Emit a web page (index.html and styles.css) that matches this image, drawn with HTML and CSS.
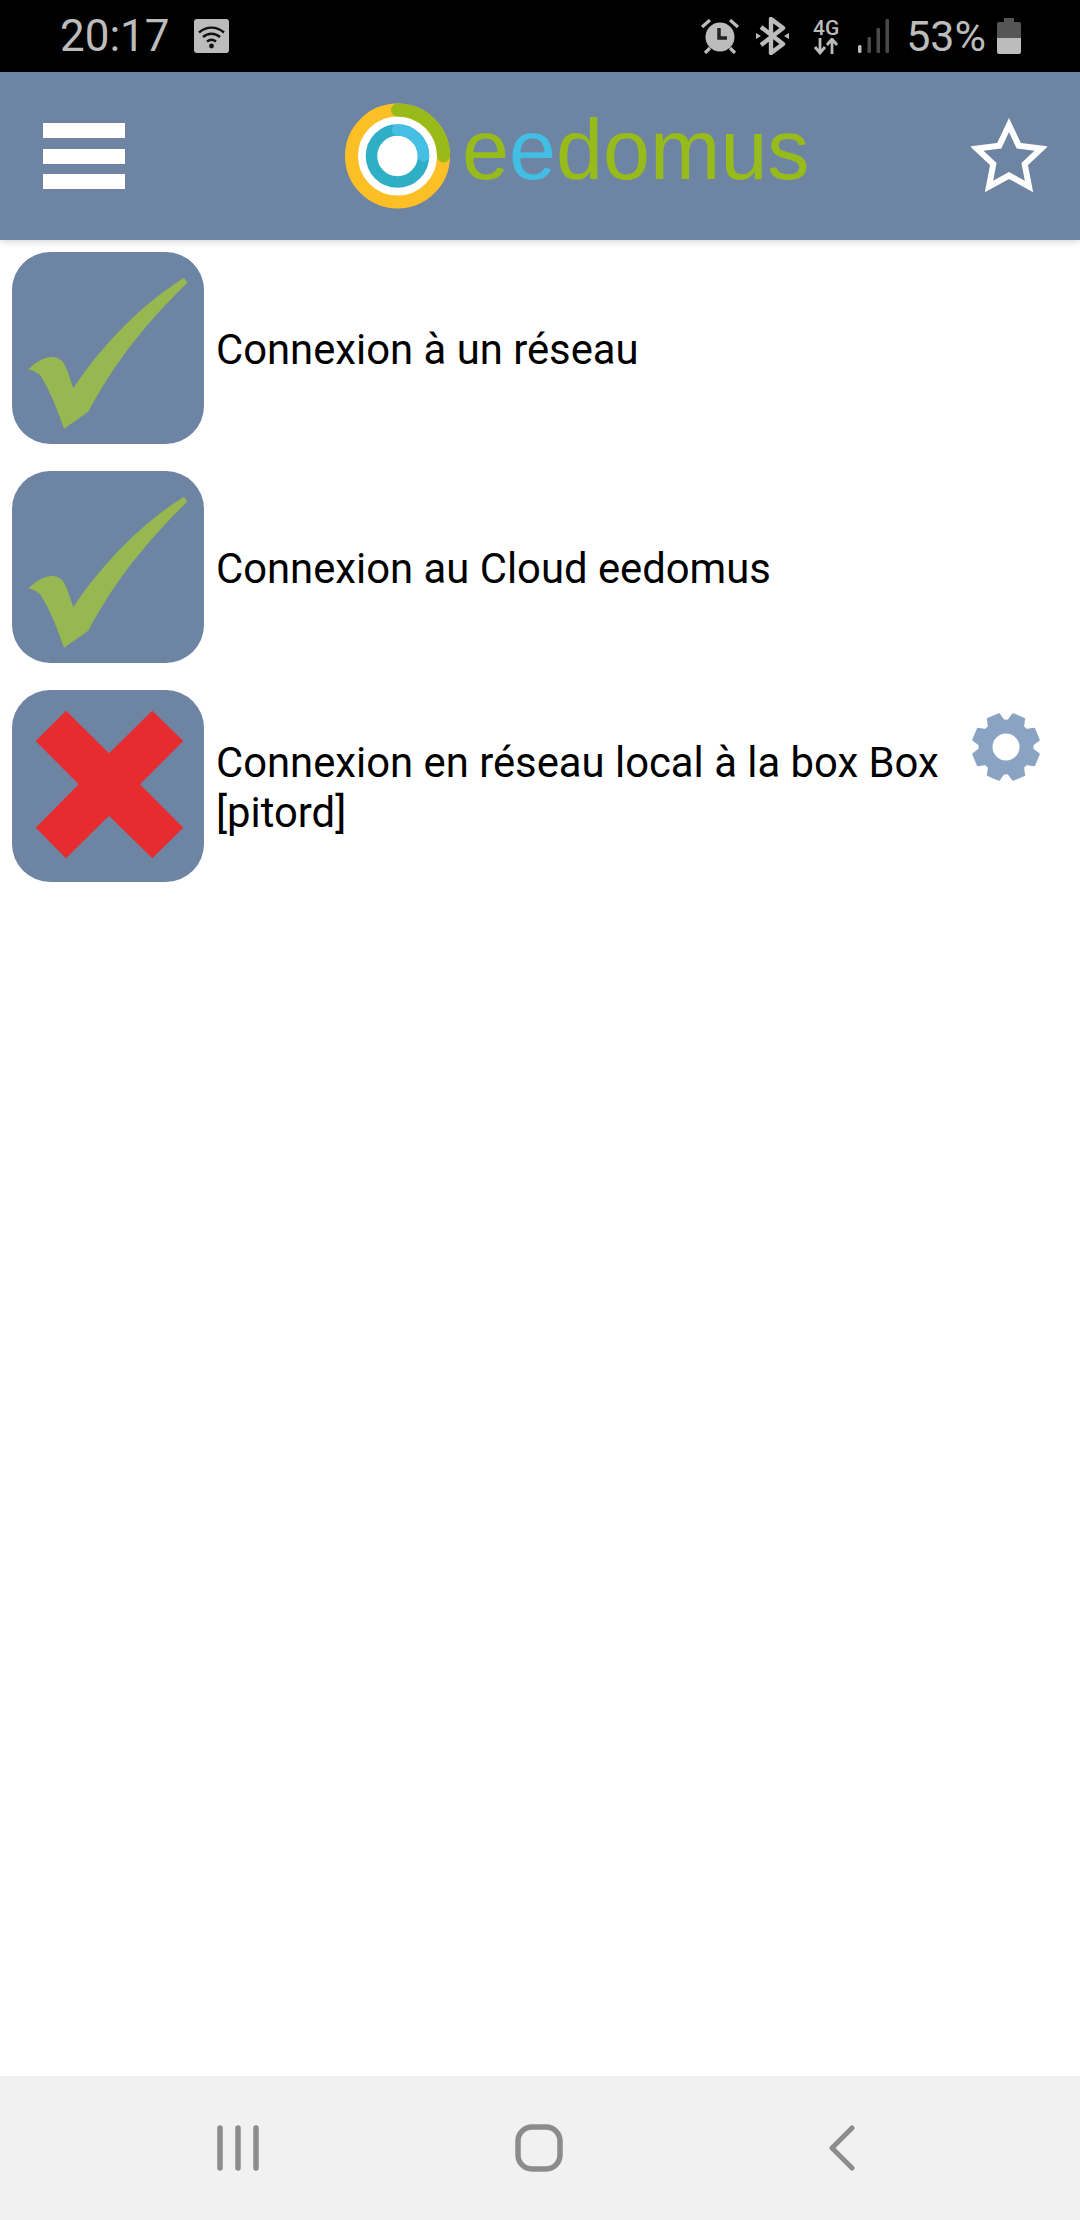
FILE: index.html
```html
<!DOCTYPE html>
<html lang="fr">
<head>
<meta charset="utf-8">
<title>eedomus</title>
<link rel="stylesheet" href="styles.css">
</head>
<body>
<div class="status">
  <span class="time">20:17</span>
  <svg class="wifi" viewBox="0 0 35 34">
    <rect width="35" height="34" rx="3" fill="#bcbcbc"/>
    <g fill="none" stroke="#111" stroke-width="2.4">
      <path d="M5 13.5c7.500-6.500 17.500-6.500 25 0"/>
      <path d="M9 18c5-4.300 12-4.300 17 0"/>
      <path d="M13 22.500c2.700-2.200 6.300-2.200 9 0"/>
    </g>
    <circle cx="17.500" cy="27" r="2.400" fill="#111"/>
  </svg>
  <div class="status-right">
    <svg class="alarm" viewBox="0 0 38 36">
      <circle cx="19" cy="19" r="14.500" fill="#bcbcbc"/>
      <path d="M18 10v10h8" fill="none" stroke="#222" stroke-width="3.500"/>
      <path d="M1 9 9 2M37 9 29 2M9 30l-5 5M29 30l5 5" stroke="#bcbcbc" stroke-width="3.200" fill="none"/>
    </svg>
    <svg class="bt" viewBox="0 0 33 38">
      <path d="M5 10 27 27 15 36V2L27 11 5 28" fill="none" stroke="#bcbcbc" stroke-width="4.400" stroke-linejoin="round"/>
      <path d="M0 16l5 3-5 3zM33 16l-5 3 5 3z" fill="#bcbcbc"/>
    </svg>
    <div class="net">
      <span class="net-label">4G</span>
      <svg class="net-arrows" viewBox="0 0 28 17">
        <path d="M8 0v14M3 9l5 6 5-6M20 16V2M15 7l5-6 5 6" fill="none" stroke="#bcbcbc" stroke-width="2.800"/>
      </svg>
    </div>
    <svg class="signal" viewBox="0 0 31 34">
      <rect x="0" y="26" width="3.500" height="8" rx="1.500" fill="#bcbcbc"/>
      <rect x="9.500" y="18" width="3.500" height="16" rx="1" fill="#4a4a4a"/>
      <rect x="18.500" y="9" width="3.500" height="25" rx="1" fill="#4a4a4a"/>
      <rect x="27.500" y="0" width="3.500" height="34" rx="1" fill="#4a4a4a"/>
    </svg>
    <span class="pct">53%</span>
    <svg class="battery" viewBox="0 0 24 36">
      <path d="M7 0h10v4h5q2 0 2 2v14H0V6q0-2 2-2h5z" fill="#555"/>
      <path d="M0 20h24v14q0 2-2 2H2q-2 0-2-2z" fill="#bcbcbc"/>
    </svg>
  </div>
</div>

<header class="topbar">
  <div class="burger"><i></i><i></i><i></i></div>
  <div class="brand">
    <svg class="brand-mark" viewBox="0 0 105 108">
      <circle cx="52.500" cy="54" r="46" fill="#fff" stroke="#fdbf26" stroke-width="13"/>
      <path d="M52.500 8A46 46 0 0 1 98.500 54" fill="none" stroke="#98bb19" stroke-width="13" stroke-linecap="round"/>
      <circle cx="52.500" cy="54" r="26" fill="#fff" stroke="#2eafc6" stroke-width="11.500"/>
      <path d="M52.500 28A26 26 0 0 1 78.500 54" fill="none" stroke="#45bfe3" stroke-width="11.500" stroke-linecap="round"/>
    </svg>
    <span class="brand-name"><span class="green">e</span><span class="blue">e</span><span class="green">domus</span></span>
  </div>
  <svg class="star" viewBox="0 0 76 76">
    <path d="M38 7 47.700 27.650 70.300 30.500 53.700 46.100 58 68.500 38 57.500 18 68.500 22.300 46.100 5.700 30.500 28.300 27.650Z" fill="none" stroke="#fff" stroke-width="6" stroke-miterlimit="10"/>
  </svg>
</header>

<main class="list">
  <div class="row">
    <svg class="state" viewBox="0 0 192 192">
      <rect width="192" height="192" rx="38" fill="#6e84a3"/>
      <path d="M16.300 117.300C24 110 32 105 40 105 48 105 52 110 55 118L61.300 136.300C85 100 125 55 172 25.700L175.300 30.700C130 75 100 115 76.300 159.700L52 176.700C46 160 38 138 28 123 24 120 20 118 16.300 117.300Z" fill="#97b851"/>
    </svg>
    <span class="label">Connexion à un réseau</span>
  </div>
  <div class="row">
    <svg class="state" viewBox="0 0 192 192">
      <rect width="192" height="192" rx="38" fill="#6e84a3"/>
      <path d="M16.300 117.300C24 110 32 105 40 105 48 105 52 110 55 118L61.300 136.300C85 100 125 55 172 25.700L175.300 30.700C130 75 100 115 76.300 159.700L52 176.700C46 160 38 138 28 123 24 120 20 118 16.300 117.300Z" fill="#97b851"/>
    </svg>
    <span class="label">Connexion au Cloud eedomus</span>
  </div>
  <div class="row">
    <svg class="state" viewBox="0 0 192 192">
      <rect width="192" height="192" rx="38" fill="#6e84a3"/>
      <path d="M54 20.700 97 63.300 140.300 20.700 171.300 51 128 94.300 171.300 137.700 140.300 168.300 97 125.700 54 168.300 23.700 137.700 66.700 94.300 23.700 51Z" fill="#e72c30"/>
    </svg>
    <span class="label">Connexion en réseau local à la box Box [pitord]</span>
    <svg class="gear" viewBox="-36 -36 72 72">
      <circle r="20.500" fill="none" stroke="#8aa3c2" stroke-width="14"/>
      <g fill="#8aa3c2" stroke="#8aa3c2" stroke-width="2" stroke-linejoin="round">
        <path d="M-8-25-6-33H6L8-25Z" transform="rotate(22.500)"/>
        <path d="M-8-25-6-33H6L8-25Z" transform="rotate(67.500)"/>
        <path d="M-8-25-6-33H6L8-25Z" transform="rotate(112.500)"/>
        <path d="M-8-25-6-33H6L8-25Z" transform="rotate(157.500)"/>
        <path d="M-8-25-6-33H6L8-25Z" transform="rotate(202.500)"/>
        <path d="M-8-25-6-33H6L8-25Z" transform="rotate(247.500)"/>
        <path d="M-8-25-6-33H6L8-25Z" transform="rotate(292.500)"/>
        <path d="M-8-25-6-33H6L8-25Z" transform="rotate(337.500)"/>
      </g>
    </svg>
  </div>
</main>

<nav class="navbar">
  <svg class="nav-recent" viewBox="0 0 42 46">
    <path d="M3 3V43M21 3V43M39 3V43" fill="none" stroke="#8c8c8c" stroke-width="5.500" stroke-linecap="round"/>
  </svg>
  <svg class="nav-home" viewBox="0 0 48 48">
    <rect x="3" y="3" width="42" height="42" rx="14" fill="none" stroke="#8c8c8c" stroke-width="5.500"/>
  </svg>
  <svg class="nav-back" viewBox="0 0 26 46">
    <path d="M23 3 3 23 23 43" fill="none" stroke="#8c8c8c" stroke-width="5" stroke-linecap="round" stroke-linejoin="round"/>
  </svg>
</nav>
</body>
</html>
```
FILE: styles.css
```css
* { box-sizing: border-box; }
html, body { margin: 0; padding: 0; }
body {
  width: 1080px;
  height: 2220px;
  display: flex;
  flex-direction: column;
  background: #fff;
  font-family: Roboto, "Liberation Sans", sans-serif;
  overflow: hidden;
}
svg { display: block; flex: none; }

.status {
  height: 72px;
  flex: none;
  background: #000;
  color: #bcbcbc;
  display: flex;
  align-items: center;
  padding: 0 59px 0 60px;
}
.time { font-size: 44px; line-height: 72px; }
.wifi { width: 35px; height: 34px; margin-left: 24px; }
.status-right { margin-left: auto; display: flex; align-items: center; }
.alarm { width: 38px; height: 36px; }
.bt { width: 33px; height: 38px; margin-left: 17px; }
.net { width: 28px; margin-left: 23px; display: flex; flex-direction: column; align-items: center; }
.net-label { font-size: 21px; line-height: 20px; font-weight: 500; }
.net-arrows { width: 28px; height: 17px; }
.signal { width: 31px; height: 34px; margin-left: 18px; }
.pct { font-size: 43px; line-height: 72px; margin-left: 17px; }
.battery { width: 24px; height: 36px; margin-left: 11px; }

.topbar {
  height: 168px;
  flex: none;
  background: #6e84a3;
  display: flex;
  align-items: center;
  padding: 0 33px 0 43px;
  box-shadow: 0 2px 7px rgba(0, 0, 0, .16);
  position: relative;
}
.burger { width: 82px; display: flex; flex-direction: column; gap: 10.500px; }
.burger i { display: block; height: 15px; background: #fff; }
.brand { display: flex; align-items: center; margin-left: 220px; }
.brand-mark { width: 105px; height: 108px; }
.brand-name {
  font-family: "Liberation Sans", Arial, sans-serif;
  font-size: 84.500px;
  line-height: 84px;
  margin: -12px 0 0 12px;
}
.green { color: #97bb1b; }
.blue { color: #42bde3; }
.star { width: 76px; height: 76px; margin-left: auto; }

.list { flex: 1; padding: 12px 0 0 12px; display: flex; flex-direction: column; gap: 27px; }
.row { display: flex; align-items: center; }
.state { width: 192px; height: 192px; }
.label {
  width: 750px;
  margin-left: 12px;
  padding-top: 3px;
  font-size: 41.800px;
  line-height: 49.500px;
  color: #000;
}
.gear { width: 72px; height: 72px; align-self: flex-start; margin: 21px 0 0 4px; }

.navbar {
  height: 144px;
  flex: none;
  background: #f1f1f1;
  display: flex;
  align-items: center;
  padding-left: 214px;
  gap: 259px;
}
.nav-recent { width: 42px; height: 46px; margin-left: 3px; }
.nav-home { width: 48px; height: 48px; margin-left: -3px; }
.nav-back { width: 26px; height: 46px; margin-left: 7px; }
```
